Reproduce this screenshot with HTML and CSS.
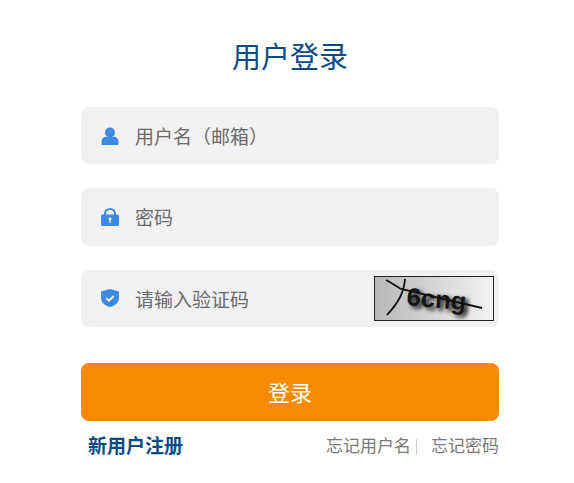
FILE: index.html
```html
<!DOCTYPE html>
<html lang="zh-CN">

<head>
    <meta charset="UTF-8">
    <meta name="viewport" content="width=device-width, initial-scale=1.0">
    <title>用户登录</title>
    <link rel="stylesheet" href="styles.css">
</head>

<body>
    <div class="login">
        <h2 class="login-title">用户登录</h2>
        <div class="field">
            <svg class="field-icon" viewBox="0 0 18 18">
                <circle cx="9" cy="5.500" r="5" fill="#3d8ae0" />
                <path d="M.6 18v-3.500c0-2.900 2.200-4.700 4.600-4.700h7.600c2.400 0 4.600 1.800 4.600 4.700V18z" fill="#3d8ae0" />
            </svg>
            <span class="field-text">用户名（邮箱）</span>
        </div>
        <div class="field">
            <svg class="field-icon" viewBox="0 0 18 18">
                <path d="M4 8V5.500a5 4.500 0 0 1 10 0V8" fill="none" stroke="#3d8ae0" stroke-width="2" />
                <rect x="0" y="6.500" width="18" height="11.500" rx="1.500" fill="#3d8ae0" />
                <circle cx="9" cy="11" r="1.400" fill="#f1f1f1" />
                <rect x="8.300" y="11" width="1.400" height="4" fill="#f1f1f1" />
            </svg>
            <span class="field-text">密码</span>
        </div>
        <div class="field field-captcha">
            <svg class="field-icon" viewBox="0 0 18 18">
                <path d="M9 0l9 2.600v6.400c0 4.500-4 7.600-9 9-5-1.400-9-4.500-9-9V2.600z" fill="#3d8ae0" />
                <path d="M5.300 9.200l2.600 2.500 4.800-4.700" fill="none" stroke="#f1f1f1" stroke-width="1.800" />
            </svg>
            <span class="field-text">请输入验证码</span>
            <svg class="captcha" viewBox="0 0 118 43">
                <defs>
                    <linearGradient id="captcha-bg">
                        <stop offset="0" stop-color="#b8b8b8" />
                        <stop offset="1" stop-color="#f2f2f2" />
                    </linearGradient>
                    <filter id="captcha-blur">
                        <feGaussianBlur stdDeviation="2" />
                    </filter>
                </defs>
                <rect width="118" height="43" fill="url(#captcha-bg)" />
                <text class="captcha-text captcha-shadow" x="34" y="31" textLength="60" lengthAdjust="spacingAndGlyphs" transform="rotate(5 34 31)" filter="url(#captcha-blur)">6cng</text>
                <text class="captcha-text" x="31" y="28" textLength="60" lengthAdjust="spacingAndGlyphs" transform="rotate(5 31 28)">6cng</text>
                <path d="M11 3c6 3 11 7 15 9l81 19M30 2c-1 14-7 24-18 36" fill="none" stroke="#111" stroke-width="1.800" />
            </svg>
        </div>
        <button class="login-btn">登录</button>
        <div class="login-links">
            <a class="link-register">新用户注册</a>
            <div class="link-group">
                <a class="link-item link-first">忘记用户名</a>
                <a class="link-item">忘记密码</a>
            </div>
        </div>
    </div>
</body>

</html>
```

FILE: styles.css
```css
* {
    box-sizing: border-box;
}

body {
    margin: 0;
    background: #fff;
    font-family: "Liberation Sans", "Noto Sans CJK SC", sans-serif;
    text-spacing-trim: space-all;
}

.login {
    width: 418px;
    margin-left: 81px;
    padding-top: 37px;
}

.login-title {
    margin: 0 0 28px;
    font-size: 29px;
    font-weight: 400;
    line-height: 42px;
    text-align: center;
    color: #0b4a85;
}

.field {
    display: flex;
    align-items: center;
    height: 57.4px;
    margin-bottom: 23.9px;
    padding-left: 20px;
    border-radius: 8px;
    background: #f1f1f1;
}

.field-icon {
    width: 18px;
    height: 18px;
    margin-right: 16px;
    flex-shrink: 0;
}

.field-text {
    font-size: 19px;
    color: #6b6b6b;
}

.field-captcha {
    margin-bottom: 36px;
    padding-right: 5px;
}

.captcha {
    width: 120px;
    height: 45px;
    margin-left: auto;
    border: 1px solid #222;
}

.captcha-text {
    font-family: "Liberation Sans", sans-serif;
    font-size: 25px;
    font-weight: 700;
    fill: #151515;
}

.captcha-shadow {
    fill: #000;
}

.login-btn {
    display: block;
    width: 100%;
    height: 58px;
    padding-bottom: 2px;
    border: 0;
    border-radius: 8px;
    background: #f78a00;
    color: #fff;
    font-family: inherit;
    font-size: 22px;
}

.login-links {
    display: flex;
    justify-content: space-between;
    align-items: center;
    padding: 12px 0 0 7px;
    line-height: 28px;
}

.link-register {
    font-size: 19px;
    font-weight: 700;
    color: #0b4a85;
}

.link-group {
    display: flex;
    align-items: center;
}

.link-item {
    font-size: 17px;
    color: #7a7a7a;
}

.link-first {
    margin-right: 14px;
    padding-right: 5px;
    border-right: 1px solid #ccd;
    line-height: 16px;
}
```
